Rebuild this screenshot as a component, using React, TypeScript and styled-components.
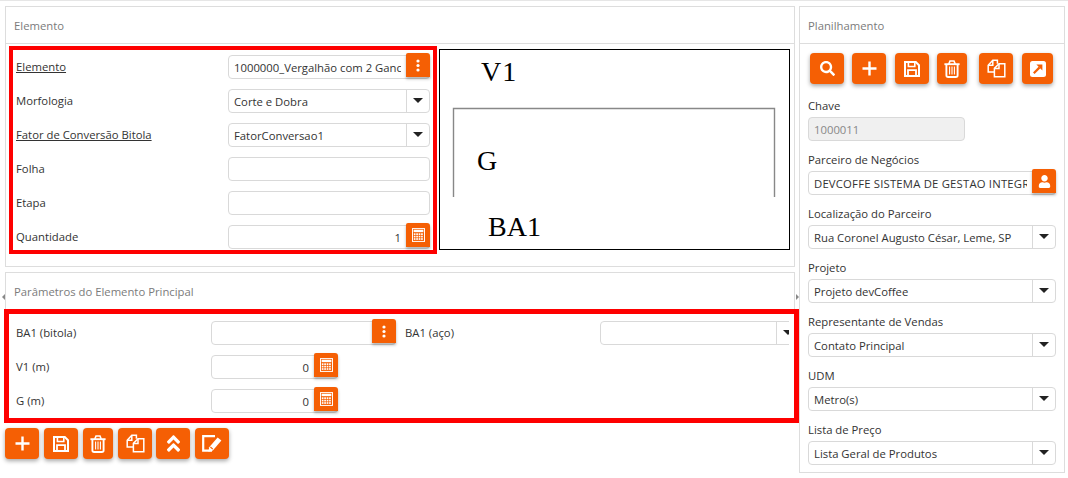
import React from 'react';
import styled, { createGlobalStyle } from 'styled-components';
import { FaAngleDoubleUp, FaSearch, FaUser } from 'react-icons/fa';

const ORANGE = '#f55f04';

function PlusIcon() {
  return (
    <svg width="15" height="15" viewBox="0 0 15 15" fill="none" stroke="#fff" strokeWidth="2.4">
      <path d="M7.5 0.5v14M0.5 7.5h14" />
    </svg>
  );
}

function DotsIcon() {
  return (
    <svg width="4" height="13" viewBox="0 0 4 13" fill="#fff">
      <circle cx="2" cy="2" r="1.6" />
      <circle cx="2" cy="6.5" r="1.6" />
      <circle cx="2" cy="11" r="1.6" />
    </svg>
  );
}

function SaveIcon() {
  return (
    <svg width="16" height="16" viewBox="0 0 16 16" fill="none" stroke="#fff" strokeWidth="2">
      <path d="M1 1h10.8L15 4.2V15H1z" />
      <path d="M4.4 1.5v4h6.4v-4" strokeWidth="1.6" />
      <path d="M4 14.5V9.2h8v5.3" strokeWidth="1.8" />
    </svg>
  );
}

function TrashIcon() {
  return (
    <svg width="16" height="18" viewBox="0 0 16 18" fill="none" stroke="#fff" strokeWidth="1.9">
      <path d="M0.4 4.2h15.2" />
      <path d="M4.8 4l1.2-3h4l1.2 3" strokeWidth="1.6" />
      <path d="M2.4 4v11.2q0 1.8 1.8 1.8h7.6q1.8 0 1.8-1.8V4" />
      <path d="M5.6 6.5v8M8 6.5v8M10.4 6.5v8" strokeWidth="1.1" />
    </svg>
  );
}

function FilesIcon() {
  return (
    <svg width="19" height="19" viewBox="0 0 19 19" fill="none" stroke="#fff" strokeWidth="1.5">
      <path d="M7 13H1.2V6.2L5.8 1.2h4.6v3.6" />
      <path d="M5.8 1.4v4.8H1.4" />
      <path d="M7.4 17.8V9.4l4.6-4.6h5.8v13z" />
      <path d="M12 5v4.6H7.6" />
    </svg>
  );
}

function EditIcon() {
  return (
    <svg width="20" height="18" viewBox="0 0 20 18" fill="none" stroke="#fff">
      <path d="M13 1.2H1.2V15.6H10" strokeWidth="2.2" />
      <path d="M15.6 2.4l3.8 3.2-8.6 9.8-4.4 1.4 0.8-4.6z" fill="#fff" stroke="none" />
      <path d="M8.4 12l2.4 2.2" stroke={ORANGE} strokeWidth="1.1" />
    </svg>
  );
}

function OpenIcon() {
  return (
    <svg width="16" height="16" viewBox="0 0 16 16">
      <rect x="0" y="0" width="16" height="16" rx="2.5" fill="#fff" />
      <path d="M3.8 12.2L9.6 6.4" stroke={ORANGE} strokeWidth="2.2" />
      <path d="M6.4 3.6h6v6z" fill={ORANGE} />
    </svg>
  );
}

function CalcIcon() {
  const cells = [7, 10, 13].flatMap((y) => [3, 6, 9, 12].map((x) => ({ x, y })));
  return (
    <svg width="13" height="14" viewBox="0 0 16 17">
      <rect x="0.6" y="0.6" width="14.8" height="15.8" fill="none" stroke="#fff" strokeWidth="1.2" />
      <rect x="2" y="2" width="12" height="3" fill="#fff" />
      {cells.map((c) => (
        <rect key={`${c.x}-${c.y}`} x={c.x - 0.8} y={c.y - 0.6} width="2.1" height="2.1" fill="#fff" />
      ))}
    </svg>
  );
}

function Field({
  value,
  $align,
  $disabled,
}: {
  value?: string;
  $align?: string;
  $disabled?: boolean;
}) {
  return <TextBox readOnly value={value ?? ''} $align={$align} $disabled={$disabled} />;
}

function Select({ value }: { value?: string }) {
  return (
    <SelectBox>
      <SelectText>{value}</SelectText>
      <SelectArrow>
        <Caret />
      </SelectArrow>
    </SelectBox>
  );
}

function Lookup({ value, width }: { value?: string; width?: number }) {
  return (
    <InputWrap $width={width}>
      <TextBox readOnly value={value ?? ''} $pad />
      <SideButton>
        <DotsIcon />
      </SideButton>
    </InputWrap>
  );
}

function Calc({ value, width }: { value: string; width?: number }) {
  return (
    <InputWrap $width={width}>
      <TextBox readOnly value={value} $align="right" $pad />
      <SideButton>
        <CalcIcon />
      </SideButton>
    </InputWrap>
  );
}

export default function App() {
  return (
    <>
      <GlobalStyle />
      <Page>
        <LeftColumn>
          <Panel>
            <PanelHeader>Elemento</PanelHeader>
            <ElementBody>
              <MainForm>
                <FormRow>
                  <LinkLabel>Elemento</LinkLabel>
                  <Lookup value="1000000_Vergalhão com 2 Ganchos" />
                </FormRow>
                <FormRow>
                  <Label>Morfologia</Label>
                  <Select value="Corte e Dobra" />
                </FormRow>
                <FormRow>
                  <LinkLabel>Fator de Conversão Bitola</LinkLabel>
                  <Select value="FatorConversao1" />
                </FormRow>
                <FormRow>
                  <Label>Folha</Label>
                  <Field />
                </FormRow>
                <FormRow>
                  <Label>Etapa</Label>
                  <Field />
                </FormRow>
                <FormRow>
                  <Label>Quantidade</Label>
                  <Calc value="1" />
                </FormRow>
              </MainForm>
              <Drawing viewBox="0 0 351 201" width="351" height="201">
                <rect x="0.5" y="0.5" width="350" height="200" fill="#fff" stroke="#000" />
                <path d="M14.5 148V59.5H335.5V148" fill="none" stroke="#888" strokeWidth="1.4" />
                <DrawingText x="42" y="32" letterSpacing="1">V1</DrawingText>
                <DrawingText x="38" y="121">G</DrawingText>
                <DrawingText x="49" y="187">BA1</DrawingText>
              </Drawing>
            </ElementBody>
          </Panel>
          <ParamsPanel>
            <LeftHandle />
            <RightHandle />
            <PanelHeader $flat>Parâmetros do Elemento Principal</PanelHeader>
            <ParamsForm>
              <ParamRow>
                <Label>BA1 (bitola)</Label>
                <Lookup width={185} />
                <SteelLabel>BA1 (aço)</SteelLabel>
                <ClippedSelect>
                  <Select />
                </ClippedSelect>
              </ParamRow>
              <ParamRow>
                <Label>V1 (m)</Label>
                <Calc value="0" width={127} />
              </ParamRow>
              <ParamRow>
                <Label>G (m)</Label>
                <Calc value="0" width={127} />
              </ParamRow>
            </ParamsForm>
          </ParamsPanel>
          <BottomBar>
            <ToolButton $w={34}><PlusIcon /></ToolButton>
            <ToolButton $w={34}><SaveIcon /></ToolButton>
            <ToolButton $w={30}><TrashIcon /></ToolButton>
            <ToolButton $w={34}><FilesIcon /></ToolButton>
            <ToolButton $w={34} $ml={-1}><FaAngleDoubleUp size={21} /></ToolButton>
            <ToolButton $w={34}><EditIcon /></ToolButton>
          </BottomBar>
        </LeftColumn>

        <SidePanel>
          <PanelHeader>Planilhamento</PanelHeader>
          <SideBody>
            <SideBar>
              <ToolButton $w={34} $ml={2}><FaSearch size={15} /></ToolButton>
              <ToolButton $w={34} $ml={8}><PlusIcon /></ToolButton>
              <ToolButton $w={34} $ml={9}><SaveIcon /></ToolButton>
              <ToolButton $w={30} $ml={8}><TrashIcon /></ToolButton>
              <ToolButton $w={34} $ml={12}><FilesIcon /></ToolButton>
              <ToolButton $w={31} $ml={9}><OpenIcon /></ToolButton>
            </SideBar>
            <SideField>
              <SideLabel>Chave</SideLabel>
              <ChaveWrap>
                <Field value="1000011" $disabled />
              </ChaveWrap>
            </SideField>
            <SideField>
              <SideLabel>Parceiro de Negócios</SideLabel>
              <InputWrap>
                <TextBox readOnly value="DEVCOFFE SISTEMA DE GESTAO INTEGR" $pad $spaced />
                <SideButton>
                  <FaUser size={13} />
                </SideButton>
              </InputWrap>
            </SideField>
            <SideField>
              <SideLabel>Localização do Parceiro</SideLabel>
              <Select value="Rua Coronel Augusto César, Leme, SP" />
            </SideField>
            <SideField>
              <SideLabel>Projeto</SideLabel>
              <Select value="Projeto devCoffee" />
            </SideField>
            <SideField>
              <SideLabel>Representante de Vendas</SideLabel>
              <Select value="Contato Principal" />
            </SideField>
            <SideField>
              <SideLabel>UDM</SideLabel>
              <Select value="Metro(s)" />
            </SideField>
            <SideField>
              <SideLabel>Lista de Preço</SideLabel>
              <Select value="Lista Geral de Produtos" />
            </SideField>
          </SideBody>
        </SidePanel>
      </Page>
    </>
  );
}

const GlobalStyle = createGlobalStyle`
  html, body {
    margin: 0;
    padding: 0;
    background: #fff;
  }
  * {
    box-sizing: border-box;
  }
  body {
    font-family: 'Open Sans', 'Noto Sans', sans-serif;
    font-size: 11.3px;
    color: #333;
  }
`;

const Page = styled.div`
  width: 1068px;
  height: 478px;
  border-top: 1px solid #e6e6e6;
  padding: 5px 3px 0 5px;
  display: flex;
  align-items: flex-start;
  gap: 4px;
  overflow: hidden;
`;

const LeftColumn = styled.div`
  width: 790px;
  flex: none;
  display: flex;
  flex-direction: column;
`;

const Panel = styled.section`
  height: 261px;
  border: 1px solid #ddd;
`;

const PanelHeader = styled.div<{ $flat?: boolean }>`
  height: ${(p) => (p.$flat ? '36px' : '37px')};
  padding: 0 8px;
  display: flex;
  align-items: center;
  color: #7b7b7b;
  border-bottom: ${(p) => (p.$flat ? 'none' : '1px solid #ddd')};
`;

const ElementBody = styled.div`
  display: flex;
  align-items: flex-start;
  padding: 2px 0 0 3px;
  gap: 2px;
`;

const MainForm = styled.div`
  width: 428px;
  height: 208px;
  flex: none;
  border: 4px solid #fe0000;
  padding: 5px 2px 0 3px;
  display: flex;
  flex-direction: column;
  gap: 10px;
`;

const FormRow = styled.div`
  height: 24px;
  display: grid;
  grid-template-columns: 212px 202px;
  align-items: center;
`;

const Label = styled.span`
  white-space: nowrap;
  margin-bottom: 2px;
`;

const LinkLabel = styled(Label)`
  text-decoration: underline;
`;

const Drawing = styled.svg`
  margin-top: 3px;
  flex: none;
`;

const DrawingText = styled.text`
  font-family: 'Liberation Serif', serif;
  font-size: 28px;
  fill: #000;
`;

const ParamsPanel = styled.section`
  position: relative;
  margin-top: 5px;
  border: 1px solid #ddd;
  border-bottom: none;
`;

const LeftHandle = styled.i`
  position: absolute;
  left: -4px;
  top: 21px;
  border: 3px solid transparent;
  border-left: none;
  border-right: 3px solid #888;
`;

const RightHandle = styled.i`
  position: absolute;
  right: -5px;
  top: 21px;
  border: 3px solid transparent;
  border-right: none;
  border-left: 3px solid #888;
`;

const ParamsForm = styled.div`
  height: 114px;
  margin: 0 -5px 0 -2px;
  border: 5px solid #fe0000;
  padding: 7px 0 0 7px;
  display: flex;
  flex-direction: column;
  gap: 10px;
  position: relative;
`;

const ParamRow = styled.div`
  height: 24px;
  display: flex;
  align-items: center;

  & > ${Label}:first-child {
    width: 195px;
    flex: none;
  }
`;

const SteelLabel = styled(Label)`
  width: 195px;
  flex: none;
  margin-left: 9px;
`;

const ClippedSelect = styled.div`
  width: 189px;
  flex: none;
  overflow: hidden;

  & > div {
    width: 200px;
  }
`;

const TextBox = styled.input<{
  $align?: string;
  $pad?: boolean;
  $disabled?: boolean;
  $spaced?: boolean;
}>`
  display: block;
  width: 100%;
  height: 24px;
  margin: 0;
  padding: ${(p) => (p.$pad ? '0 28px 0 5px' : '0 5px')};
  border: 1px solid #d9d9d9;
  border-radius: 4px;
  outline: none;
  font-family: inherit;
  font-size: 11.3px;
  letter-spacing: ${(p) => (p.$spaced ? '0.2px' : 'normal')};
  text-align: ${(p) => p.$align ?? 'left'};
  color: ${(p) => (p.$disabled ? '#888' : '#333')};
  background: ${(p) => (p.$disabled ? '#f0f0f0' : '#fff')};
`;

const InputWrap = styled.div<{ $width?: number }>`
  position: relative;
  height: 24px;
  flex: none;
  width: ${(p) => (p.$width ? `${p.$width}px` : '100%')};
`;

const SideButton = styled.span`
  position: absolute;
  top: -2px;
  right: 0;
  width: 24px;
  height: 24px;
  display: flex;
  align-items: center;
  justify-content: center;
  color: #fff;
  background: ${ORANGE};
  border-radius: 2px 3px 0 0;
  box-shadow: 0 2px 3px rgba(0, 0, 0, 0.3);
`;

const SelectBox = styled.div`
  width: 100%;
  height: 24px;
  display: flex;
  border: 1px solid #d9d9d9;
  border-radius: 4px;
  background: #fff;
`;

const SelectText = styled.span`
  flex: 1;
  min-width: 0;
  padding-left: 5px;
  line-height: 23px;
  white-space: nowrap;
  overflow: hidden;
`;

const SelectArrow = styled.span`
  width: 23px;
  flex: none;
  display: flex;
  align-items: center;
  justify-content: center;
  border-left: 1px solid #d9d9d9;
`;

const Caret = styled.i`
  margin-top: -2px;
  border-left: 5px solid transparent;
  border-right: 5px solid transparent;
  border-top: 5px solid #222;
`;

const BottomBar = styled.div`
  display: flex;
  gap: 5px;
  margin-top: 5px;
`;

const ToolButton = styled.span<{ $w: number; $ml?: number }>`
  width: ${(p) => p.$w}px;
  height: 31px;
  flex: none;
  margin-left: ${(p) => p.$ml ?? 0}px;
  display: flex;
  align-items: center;
  justify-content: center;
  color: #fff;
  background: ${ORANGE};
  border-radius: 4px;
  box-shadow: 0 2px 4px rgba(0, 0, 0, 0.35);
`;

const SidePanel = styled.aside`
  width: 266px;
  height: 467px;
  flex: none;
  border: 1px solid #ddd;
`;

const SideBody = styled.div`
  padding: 9px 8px 0;
  display: flex;
  flex-direction: column;
  gap: 10px;
`;

const SideBar = styled.div`
  display: flex;
  margin-bottom: 3px;
`;

const SideField = styled.div`
  display: flex;
  flex-direction: column;
  gap: 2px;
`;

const SideLabel = styled.label`
  height: 18px;
  line-height: 17px;
`;

const ChaveWrap = styled.div`
  width: 157px;
`;
